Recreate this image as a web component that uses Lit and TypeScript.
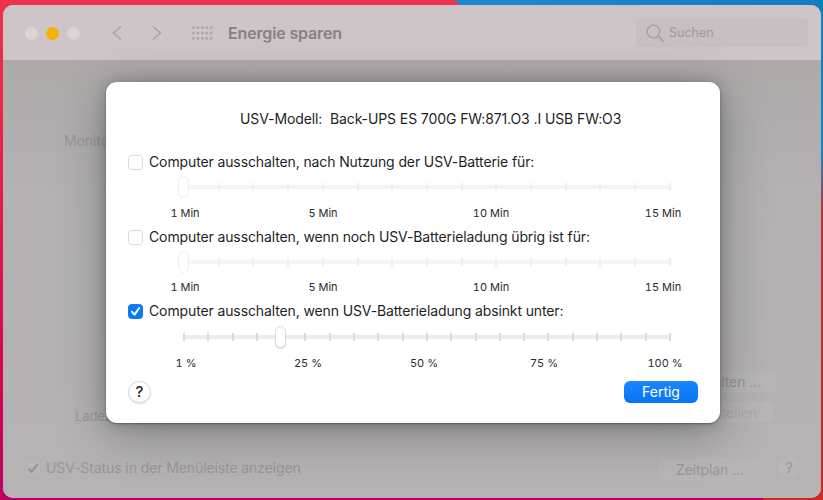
import { LitElement, html, css, svg } from "lit";
import { customElement } from "lit/decorators.js";

const TEXT_FONT = css`Inter, "Liberation Sans", sans-serif`;

interface SliderCfg {
  label: string;
  checked: boolean;
  intervals: number;
  thumb: number;
  labels: { text: string; at: number }[];
}

const MIN_LABELS = [
  { text: "1 Min", at: 185 },
  { text: "5 Min", at: 323 },
  { text: "10 Min", at: 491 },
  { text: "15 Min", at: 663 },
];

const SLIDERS: SliderCfg[] = [
  {
    label: "Computer ausschalten, nach Nutzung der USV-Batterie für:",
    checked: false,
    intervals: 14,
    thumb: 0,
    labels: MIN_LABELS,
  },
  {
    label: "Computer ausschalten, wenn noch USV-Batterieladung übrig ist für:",
    checked: false,
    intervals: 14,
    thumb: 0,
    labels: MIN_LABELS,
  },
  {
    label: "Computer ausschalten, wenn USV-Batterieladung absinkt unter:",
    checked: true,
    intervals: 20,
    thumb: 0.2,
    labels: [
      { text: "1 %", at: 186 },
      { text: "25 %", at: 308 },
      { text: "50 %", at: 424 },
      { text: "75 %", at: 544 },
      { text: "100 %", at: 665 },
    ],
  },
];

function svgDot(x: number, y: number) {
  return svg`<circle cx=${x} cy=${y} r="1.5" fill="#ada8ab"/>`;
}

@customElement("app-root")
export class AppRoot extends LitElement {
  static styles = css`
    :host {
      display: block;
      width: 823px;
      height: 500px;
      overflow: hidden;
      box-sizing: border-box;
      padding: 5px 2px 2px 3px;
      font-family: ${TEXT_FONT};
      background:
        linear-gradient(39deg, transparent 674px, #1a8ccb 675px, #0f7fbe 900px),
        linear-gradient(180deg, #f0324c 0, #e41f4a 35%, #d40650 75%, #bd0060 100%);
      position: relative;
    }
    .edge {
      position: absolute;
      right: 0;
      bottom: 0;
      width: 60px;
      height: 350px;
      background: linear-gradient(180deg, rgba(190, 60, 60, 0), #b73436 18%, #b92c2e 90%, #cc2a22 100%);
    }
    .win {
      position: relative;
      z-index: 1;
      height: 100%;
      border-radius: 10px;
      overflow: hidden;
      display: flex;
      flex-direction: column;
      background: #b5b2b3;
    }
    .toolbar {
      flex: 0 0 56px;
      box-sizing: border-box;
      background: #cdc5c8;
      border-bottom: 1px solid #aeaaab;
      display: flex;
      align-items: center;
      padding: 1px 13px 0 22px;
    }
    .light {
      width: 13px;
      height: 13px;
      border-radius: 50%;
      background: #dcd3d6;
      margin-right: 8px;
    }
    .light.y { background: #f8b00f; }
    .nav { margin-left: 23px; display: flex; gap: 28px; align-items: center; }
    .nav svg { display: block; }
    .grid-ic { margin-left: 29px; display: block; }
    .title {
      margin-left: 15px;
      font-size: 16px;
      font-weight: 600;
      letter-spacing: -0.15px;
      color: #858184;
      white-space: nowrap;
    }
    .search {
      margin-left: auto;
      margin-top: -1px;
      width: 172px;
      height: 29px;
      border-radius: 5px;
      background: #c7bfc2;
      display: flex;
      align-items: center;
      gap: 4px;
      padding-left: 9px;
      box-sizing: border-box;
      color: #9f999c;
      font-size: 12.5px;
    }
    .body {
      flex: 1;
      position: relative;
      background: linear-gradient(180deg, #adabaa 0, #b3b1b1 30%, #b6b3b4 100%);
      color: #9a9698;
    }
    .bg {
      position: absolute;
      white-space: nowrap;
      font-size: 14px;
      letter-spacing: -0.1px;
      color: #9a9698;
    }
    .bg.btn {
      box-sizing: border-box;
      display: flex;
      align-items: center;
      justify-content: center;
      background: #b9b6b7;
      border-radius: 5px;
    }
    .bg.btn.end { justify-content: flex-end; }
    .bg.btn.off { color: #aca8aa; }
    .bg.help {
      width: 22px;
      height: 22px;
      border-radius: 50%;
      background: #b9b6b7;
      display: flex;
      align-items: center;
      justify-content: center;
      font-size: 15px;
    }
    .bg.status {
      display: flex;
      align-items: center;
      gap: 6px;
    }
    .statusbox {
      width: 15px;
      height: 15px;
      border-radius: 3px;
      background: #b9b6b7;
      display: flex;
      align-items: center;
      justify-content: center;
    }
    .dialog {
      position: absolute;
      left: 103px;
      top: 21px;
      width: 614px;
      height: 341px;
      box-sizing: border-box;
      background: #fff;
      border-radius: 11px;
      box-shadow:
        0 1px 2px rgba(60, 60, 60, 0.6),
        0 0 16px rgba(0, 0, 0, 0.2),
        0 10px 50px rgba(0, 0, 0, 0.3);
      padding: 28px 22px 0 22px;
      color: #1f1f1f;
      display: flex;
      flex-direction: column;
    }
    .model {
      font-size: 14px;
      line-height: 17px;
      letter-spacing: -0.1px;
      padding-left: 112px;
      white-space: pre;
    }
    .option { display: flex; flex-direction: column; margin-top: 8px; }
    .option.o0 { margin-top: 26px; }
    .check-row {
      display: flex;
      align-items: center;
      gap: 6px;
      font-size: 14px;
      line-height: 18px;
      letter-spacing: -0.12px;
      white-space: nowrap;
    }
    .box {
      width: 15px;
      height: 15px;
      box-sizing: border-box;
      border: 1px solid #dcd7db;
      border-radius: 3.5px;
      background: #fff;
      display: flex;
      align-items: center;
      justify-content: center;
      flex: none;
    }
    .box.on { background: #0a7bf5; border-color: #0a7bf5; }
    .box svg { display: block; }
    .slider {
      position: relative;
      margin-left: 55px;
      width: 488px;
      height: 22px;
      display: flex;
      align-items: center;
      justify-content: space-between;
      margin-top: 5px;
    }
    .o2 .slider { margin-top: 6px; }
    .line {
      position: absolute;
      left: 0;
      right: 0;
      top: 9px;
      height: 4px;
      background: #f8f3f9;
    }
    .slider.on .line { background: #f0e9f1; }
    .tick {
      position: relative;
      width: 2px;
      height: 8px;
      background: #f2ebf3;
    }
    .slider.on .tick { background: #ded8df; }
    .thumb {
      position: absolute;
      top: 0;
      width: 11px;
      height: 22px;
      box-sizing: border-box;
      background: #fff;
      border: 1px solid #f1ecf0;
      border-radius: 6px;
      margin-left: -5.5px;
    }
    .slider.on .thumb {
      border-color: #dcd8dc;
      box-shadow: 0 1px 1px rgba(0, 0, 0, 0.12);
    }
    .labels {
      display: flex;
      font-size: 11px;
      line-height: 14px;
      height: 14px;
      margin-top: 8px;
      color: #2c2c2c;
      font-variant-numeric: tabular-nums;
    }
    .o1 .labels { margin-top: 7px; }
    .lbl {
      width: 0;
      display: flex;
      justify-content: center;
      white-space: nowrap;
      flex: none;
    }
    .footer {
      display: flex;
      justify-content: space-between;
      align-items: center;
      margin-top: 10.5px;
    }
    .q {
      width: 23px;
      height: 22px;
      border-radius: 50%;
      box-sizing: border-box;
      background: #fff;
      border: 1px solid #e2dfe2;
      box-shadow: 0 1px 1px rgba(0, 0, 0, 0.12);
      display: flex;
      align-items: center;
      justify-content: center;
      font-size: 15px;
      font-weight: 500;
      color: #222;
    }
    .done {
      width: 74px;
      height: 22px;
      border-radius: 6px;
      background: linear-gradient(180deg, #1a86ff, #0674f5);
      color: #fff;
      font-size: 14px;
      display: flex;
      align-items: center;
      justify-content: center;
    }
  `;

  private renderOption(s: SliderCfg, i: number) {
    const ticks = Array.from({ length: s.intervals + 1 });
    let prev = 0;
    const originX = 128;
    return html`
      <div class="option ${"o" + i}">
        <div class="check-row">
          <div class="box ${s.checked ? "on" : ""}">
            ${s.checked
              ? html`<svg width="11" height="11" viewBox="0 0 11 11"><path d="M2 5.8 L4.5 8.6 L9.2 2" fill="none" stroke="#fff" stroke-width="2" stroke-linecap="round" stroke-linejoin="round"/></svg>`
              : ""}
          </div>
          <span>${s.label}</span>
        </div>
        <div class="slider ${s.checked ? "on" : ""}">
          <div class="line"></div>
          ${ticks.map(() => html`<div class="tick"></div>`)}
          <div class="thumb" style="left:${s.thumb * 488}px"></div>
        </div>
        <div class="labels">
          ${s.labels.map((l) => {
            const d = l.at - originX - prev;
            prev = l.at - originX;
            return html`<div class="lbl" style="margin-left:${d}px">${l.text}</div>`;
          })}
        </div>
      </div>
    `;
  }

  render() {
    const dots: number[][] = [];
    for (let r = 0; r < 3; r++) for (let c = 0; c < 5; c++) dots.push([c * 4.4 + 1.5, r * 5.4 + 1.5]);
    return html`
      <div class="edge"></div>
      <div class="win">
        <div class="toolbar">
          <div class="light"></div>
          <div class="light y"></div>
          <div class="light"></div>
          <div class="nav">
            <svg width="12" height="16" viewBox="0 0 12 16"><path d="M10 1.5 L2.5 8 L10 14.5" fill="none" stroke="#a9a4a7" stroke-width="1.6"/></svg>
            <svg width="12" height="16" viewBox="0 0 12 16"><path d="M2 1.5 L9.5 8 L2 14.5" fill="none" stroke="#a9a4a7" stroke-width="1.6"/></svg>
          </div>
          <svg class="grid-ic" width="21" height="15" viewBox="0 0 21 15">
            ${dots.map(([x, y]) => svgDot(x, y))}
          </svg>
          <div class="title">Energie sparen</div>
          <div class="search">
            <svg width="20" height="20" viewBox="0 0 20 20"><circle cx="8.5" cy="8.5" r="6.3" fill="none" stroke="#a39da0" stroke-width="1.3"/><path d="M13 13 L18.5 18.5" stroke="#a39da0" stroke-width="1.5"/></svg>
            <span>Suchen</span>
          </div>
        </div>
        <div class="body">
          <div class="bg" style="left:61px;top:71px">Monitor</div>
          <div class="bg" style="left:704px;top:103px;font-size:10px">ile</div>
          <div class="bg btn end" style="left:640px;top:310px;width:133px;height:21px;padding-right:15px">alten ...</div>
          <div class="bg btn end off" style="left:640px;top:341px;width:130px;height:20px;padding-right:16px">stellen</div>
          <div class="bg" style="left:72px;top:347px;font-size:13px">Ladezustand</div>
          <div class="bg status" style="left:22px;top:398px">
            <div class="statusbox">
              <svg width="12" height="12" viewBox="0 0 12 12"><path d="M1.5 6.5 L4.6 10 L10.5 2" fill="none" stroke="#9a9698" stroke-width="2.2"/></svg>
            </div>
            <span>USV-Status in der Menüleiste anzeigen</span>
          </div>
          <div class="bg btn" style="left:656px;top:397px;width:102px;height:22px">Zeitplan ...</div>
          <div class="bg help" style="left:775px;top:395px">?</div>
          <div class="dialog">
            <div class="model">USV-Modell:  Back-UPS ES 700G FW:871.O3 .I USB FW:O3</div>
            ${SLIDERS.map((s, i) => this.renderOption(s, i))}
            <div class="footer">
              <div class="q">?</div>
              <div class="done">Fertig</div>
            </div>
          </div>
        </div>
      </div>
    `;
  }
}
